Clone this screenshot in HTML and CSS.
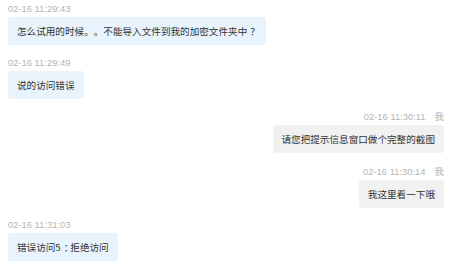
FILE: index.html
```html
<!DOCTYPE html>
<html lang="zh-CN">
<head>
    <meta charset="UTF-8">
    <meta name="viewport" content="width=device-width, initial-scale=1.0">
    <title>消息记录</title>
    <link rel="stylesheet" href="styles.css">
</head>
<body>

<div id="chat">
    <div class="msg left">
        <div class="time">02-16 11:29:43</div>
        <div class="bubble">怎么试用的时候。。不能导入文件到我的加密文件夹中<span class="punct">？</span></div>
    </div>
    <div class="msg left">
        <div class="time">02-16 11:29:49</div>
        <div class="bubble">说的访问错误</div>
    </div>
    <div class="msg right">
        <div class="time">02-16 11:30:11<span class="who">我</span></div>
        <div class="bubble">请您把提示信息窗口做个完整的截图</div>
    </div>
    <div class="msg right">
        <div class="time">02-16 11:30:14<span class="who">我</span></div>
        <div class="bubble">我这里看一下哦</div>
    </div>
    <div class="msg left">
        <div class="time">02-16 11:31:03</div>
        <div class="bubble">错误访问5<span class="punct">：</span>拒绝访问</div>
    </div>
</div>

</body>
</html>
```

FILE: styles.css
```css
body {
    font-family: "Liberation Sans", "Noto Sans CJK SC", sans-serif;
    background-color: #fff;
    margin: 0;
    padding: 0;
}
#chat {
    display: flex;
    flex-direction: column;
    gap: 10.5px;
    padding: 2px 6px 0 8px;
}
.msg {
    display: flex;
    flex-direction: column;
}
.msg.left {
    align-items: flex-start;
}
.msg.right {
    align-items: flex-end;
}
.time {
    font-size: 9.4px;
    line-height: 14px;
    color: #b4b4b4;
    margin-bottom: 1px;
}
.who {
    font-family: "Noto Sans CJK SC", sans-serif;
    font-size: 9.5px;
    margin-left: 9px;
}
.bubble {
    font-family: "Noto Sans CJK SC", sans-serif;
    font-size: 9.6px;
    line-height: 14px;
    color: #333;
    padding: 7px 9px;
    border-radius: 3px;
    white-space: nowrap;
    text-spacing-trim: space-all; /* 標點保持全寬 */
}
/* 全形標點往中間靠 */
.punct {
    padding-left: 3px;
    letter-spacing: -3px;
}
.left .bubble {
    background-color: #e8f3fc; /* 淺藍 */
}
.right .bubble {
    background-color: #f1f1f1; /* 淺灰 */
}
```
